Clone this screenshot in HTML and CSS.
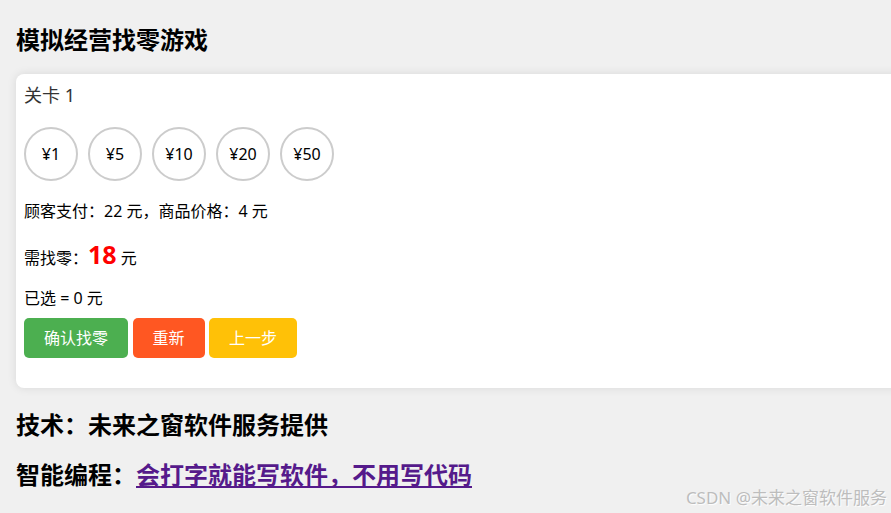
FILE: index.html
```html
<!DOCTYPE html>
<html lang="zh-CN">
<head>
    <meta charset="UTF-8">
    <meta name="viewport" content="width=device-width, initial-scale=1.0">
    <title>模拟经营找零游戏</title>
    <link rel="stylesheet" href="styles.css">
</head>
<body>

<h2 class="title">模拟经营找零游戏</h2>

<div class="game">
    <div class="level">关卡 1</div>

    <div class="coins">
        <div class="coin">¥1</div>
        <div class="coin">¥5</div>
        <div class="coin">¥10</div>
        <div class="coin">¥20</div>
        <div class="coin">¥50</div>
    </div>

    <p class="info">顾客支付：22 元，商品价格：4 元</p>
    <p class="need">需找零：<span class="amount">18</span> 元</p>
    <p class="chosen">已选 = 0 元</p>

    <div class="actions">
        <button class="btn btn-confirm">确认找零</button>
        <button class="btn btn-reset">重新</button>
        <button class="btn btn-back">上一步</button>
    </div>
</div>

<h2 class="footer-line first">技术：未来之窗软件服务提供</h2>
<h2 class="footer-line">智能编程：<a href="#">会打字就能写软件，不用写代码</a></h2>

<div class="watermark">CSDN @未来之窗软件服务</div>

</body>
</html>
```

FILE: styles.css
```css
body {
    font-family: 'Segoe UI', 'Noto Sans', 'Noto Sans CJK SC', sans-serif;
    background-color: #f0f0f0;
    color: #000;
    margin: 0;
    padding: 16px;
    overflow: hidden;
    height: 513px;
    box-sizing: border-box;
    position: relative;
}

h2 {
    font-size: 24px;
    font-weight: bold;
    line-height: 32px;
    margin: 0;
}

.title {
    margin-top: 8px;
    margin-bottom: 18px;
}

.game {
    background-color: #fff;
    border-radius: 8px;
    padding: 8px;
    margin-right: -60px;
    box-shadow: 0 0 10px rgba(0, 0, 0, 0.1);
}

.level {
    font-size: 18px;
    line-height: 26px;
    color: #333;
}

.coins {
    display: flex;
    gap: 10px;
    margin: 19px 0 20px;
}

.coin {
    width: 50px;
    height: 50px;
    border: 2px solid #ccc;
    border-radius: 50%;
    display: flex;
    align-items: center;
    justify-content: center;
    font-size: 16px;
}

.info,
.need,
.chosen {
    margin: 0;
    font-size: 16px;
}

.info {
    line-height: 21px;
}

.need {
    margin-top: 15px;
    line-height: 34px;
}

.amount {
    font-size: 25px;
    font-weight: bold;
    color: red;
}

.chosen {
    margin-top: 13px;
    line-height: 20px;
}

.actions {
    display: flex;
    gap: 4.5px;
    margin: 10px 0 22px;
}

.btn {
    font-family: inherit;
    font-size: 16px;
    line-height: 20px;
    padding: 10px 20px;
    border: none;
    border-radius: 5px;
    color: #fff;
    cursor: pointer;
}

.btn-confirm {
    background-color: #4caf50;
}

.btn-reset {
    background-color: #ff5722;
}

.btn-back {
    background-color: #ffc107;
}

.footer-line {
    margin-top: 18px;
}

.footer-line.first {
    margin-top: 21px;
}

.footer-line a {
    color: #551a8b;
}

.watermark {
    position: absolute;
    right: 4px;
    bottom: 4px;
    font-size: 17px;
    color: #bdbdbd;
    text-shadow: 1px 1px 1px #fff;
}
```
